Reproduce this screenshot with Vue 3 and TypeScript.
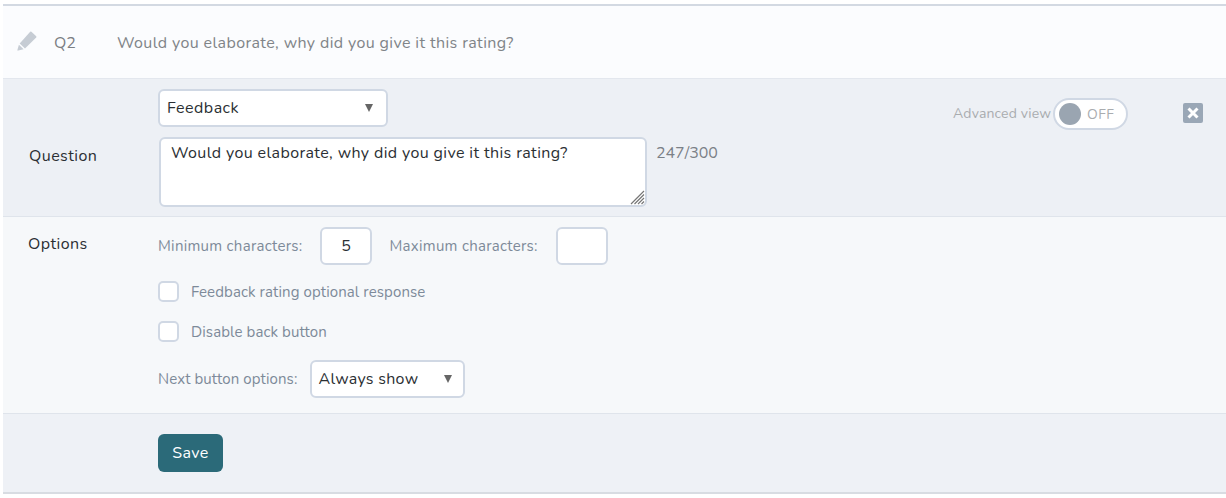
<template>
  <div class="editor">
    <header class="question-head">
      <svg class="pencil" viewBox="0 0 20 20" width="20" height="20">
        <path d="M14.4.8 19.2 5.2a.9.9 0 0 1 0 1.2L8 17.4 2.7 12.6 13.2.8a.9.9 0 0 1 1.2 0Z" />
        <path d="M1.9 13.8 6.6 18.2 1.2 19.6a.6.6 0 0 1-.8-.7Z" />
      </svg>
      <span class="q-number">Q2</span>
      <span class="q-title">{{ question }}</span>
    </header>

    <section class="question-row">
      <label class="row-label question-label">Question</label>
      <div class="question-fields">
        <div class="select-wrap type-select">
          <select class="field-select">
            <option>Feedback</option>
          </select>
        </div>
        <div class="text-row">
          <div class="text-wrap">
            <textarea class="question-text" :value="question"></textarea>
            <svg class="grip" viewBox="0 0 15 15" width="15" height="15">
              <path d="M14 1 1 14M14 4.5 4.5 14M14 8 8 14M14 11.5 11.5 14" />
            </svg>
          </div>
          <span class="counter">{{ used }}/{{ limit }}</span>
        </div>
      </div>
      <div class="advanced">
        <span class="advanced-label">Advanced view</span>
        <div class="toggle">
          <span class="knob"></span>
          <span class="toggle-text">OFF</span>
        </div>
      </div>
      <button class="close" type="button" aria-label="Close">
        <svg viewBox="0 0 20 20" width="20" height="20">
          <rect width="20" height="20" rx="2" />
          <path d="M5.5 5.5 14.5 14.5M14.5 5.5 5.5 14.5" />
        </svg>
      </button>
    </section>

    <section class="options-row">
      <label class="row-label options-label">Options</label>
      <div class="options-fields">
        <div class="chars-line">
          <span class="hint">Minimum characters:</span>
          <input class="num-input" type="text" value="5" />
          <span class="hint max-hint">Maximum characters:</span>
          <input class="num-input" type="text" value="" />
        </div>
        <label v-for="opt in checks" :key="opt" class="check-line">
          <input class="check" type="checkbox" />
          <span class="hint">{{ opt }}</span>
        </label>
        <div class="next-line">
          <span class="hint">Next button options:</span>
          <div class="select-wrap next-select">
            <select class="field-select">
              <option>Always show</option>
            </select>
          </div>
        </div>
      </div>
    </section>

    <footer class="save-row">
      <button class="save" type="button">Save</button>
    </footer>
  </div>
</template>

<script setup lang="ts">
const question = "Would you elaborate, why did you give it this rating?";
const used = 247;
const limit = 300;
const checks: string[] = ["Feedback rating optional response", "Disable back button"];
</script>

<style scoped>
.editor {
  box-sizing: border-box;
  width: 1226px;
  height: 498px;
  padding: 4px 0 0 3px;
  font-family: "Nunito", "Lato", "Open Sans", sans-serif;
  color: #2b2f33;
  background: #fff;
}

.question-head {
  display: flex;
  align-items: center;
  box-sizing: border-box;
  height: 75px;
  padding: 1px 0 0 14px;
  background: #fbfcfe;
  border-top: 2px solid #d3d9e2;
  border-bottom: 1px solid #e3e7ee;
}

.pencil {
  flex: none;
  margin-top: -3px;
  fill: #c6ccd4;
}

.q-number {
  width: 63px;
  margin-left: 17px;
  font-size: 16px;
  letter-spacing: 0.1px;
  color: #7b7f84;
}

.q-title {
  font-size: 16px;
  letter-spacing: 0.38px;
  color: #808488;
}

.question-row {
  display: flex;
  align-items: flex-start;
  box-sizing: border-box;
  height: 138px;
  padding-top: 10px;
  background: #edf0f5;
  border-bottom: 1px solid #dfe4eb;
}

.row-label {
  display: block;
  flex: none;
  font-size: 16px;
  letter-spacing: 0.45px;
  color: #2b2f33;
}

.question-label {
  width: 129px;
  padding: 56px 0 0 26px;
}

.question-fields {
  display: flex;
  flex-direction: column;
  gap: 10px;
  width: 630px;
}

.select-wrap {
  position: relative;
}

.select-wrap::after {
  content: "";
  position: absolute;
  top: 15px;
  right: 15px;
  border-top: 8px solid #666;
  border-left: 4.5px solid transparent;
  border-right: 4.5px solid transparent;
}

.field-select {
  appearance: none;
  box-sizing: border-box;
  width: 100%;
  height: 38px;
  padding-left: 7px;
  font: inherit;
  font-size: 16px;
  letter-spacing: 0.5px;
  color: #2b2f33;
  background: #fff;
  border: 2px solid #d0d8e4;
  border-radius: 6px;
}

.type-select {
  width: 230px;
}

.text-row {
  display: flex;
  align-items: flex-start;
  padding-left: 1px;
}

.text-wrap {
  position: relative;
  line-height: 0;
}

.question-text {
  box-sizing: border-box;
  width: 488px;
  height: 70px;
  padding: 3px 10px;
  font: inherit;
  font-size: 16px;
  line-height: 22px;
  letter-spacing: 0.38px;
  color: #2b2f33;
  background: #fff;
  border: 2px solid #d0d8e4;
  border-radius: 6px;
  outline: none;
  resize: none;
}

.grip {
  position: absolute;
  right: 2px;
  bottom: 2px;
  fill: none;
  stroke: #777;
  stroke-width: 1.2;
}

.counter {
  margin: 5px 0 0 9px;
  font-size: 16px;
  letter-spacing: -0.05px;
  color: #7b8087;
}

.advanced {
  display: flex;
  align-items: center;
  margin: 9px 0 0 165px;
}

.advanced-label {
  margin-top: -2px;
  font-size: 14px;
  letter-spacing: 0.17px;
  color: #a9acaf;
}

.toggle {
  display: flex;
  align-items: center;
  box-sizing: border-box;
  width: 75px;
  height: 32px;
  margin-left: 2px;
  padding-left: 4px;
  background: #fff;
  border: 2px solid #d0d8e4;
  border-radius: 16px;
}

.knob {
  width: 22px;
  height: 22px;
  border-radius: 50%;
  background: #9aa5b1;
}

.toggle-text {
  margin-left: 6px;
  font-size: 14px;
  letter-spacing: 0.35px;
  color: #a9acaf;
}

.close {
  margin: 14px 0 0 55px;
  padding: 0;
  line-height: 0;
  background: none;
  border: 0;
}

.close rect {
  fill: #9aa7b6;
}

.close path {
  fill: none;
  stroke: #fff;
  stroke-width: 3;
}

.options-row {
  display: flex;
  box-sizing: border-box;
  height: 197px;
  padding-top: 10px;
  background: #f6f8fa;
  border-bottom: 1px solid #dfe4eb;
}

.options-label {
  width: 130px;
  padding: 6px 0 0 25px;
}

.options-fields {
  display: flex;
  flex-direction: column;
}

.chars-line,
.next-line,
.check-line {
  display: flex;
  align-items: center;
}

.hint {
  font-size: 15px;
  letter-spacing: 0.1px;
  color: #7d8a99;
}

.chars-line .hint {
  letter-spacing: 0.29px;
}

.check-line .hint {
  margin-top: 2px;
}

.num-input {
  box-sizing: border-box;
  width: 52px;
  height: 38px;
  margin-left: 18px;
  padding: 0 1px 0 0;
  font: inherit;
  font-size: 16px;
  text-align: center;
  color: #2b2f33;
  background: #fff;
  border: 2px solid #d0d8e4;
  border-radius: 6px;
  outline: none;
}

.max-hint {
  margin-left: 17px;
}

.check-line {
  height: 22px;
  margin-top: 18px;
}

.check-line:first-of-type {
  margin-top: 15px;
}

.check {
  appearance: none;
  box-sizing: border-box;
  width: 21px;
  height: 21px;
  margin: 0 12px 0 0;
  background: #fff;
  border: 2px solid #d0d8e4;
  border-radius: 5px;
}

.next-line {
  margin-top: 18px;
}

.next-select {
  width: 155px;
  margin-left: 13px;
}

.next-select::after {
  right: 13px;
}

.next-select .field-select {
  padding-left: 6px;
  letter-spacing: 0.28px;
}

.save-row {
  box-sizing: border-box;
  height: 80px;
  padding: 20px 0 0 155px;
  background: #eef1f6;
  border-bottom: 2px solid #d8dce2;
}

.save {
  width: 65px;
  height: 38px;
  padding: 0;
  font: inherit;
  font-size: 16px;
  letter-spacing: 0.45px;
  color: #fff;
  background: #2b6a79;
  border: 0;
  border-radius: 6px;
}
</style>
